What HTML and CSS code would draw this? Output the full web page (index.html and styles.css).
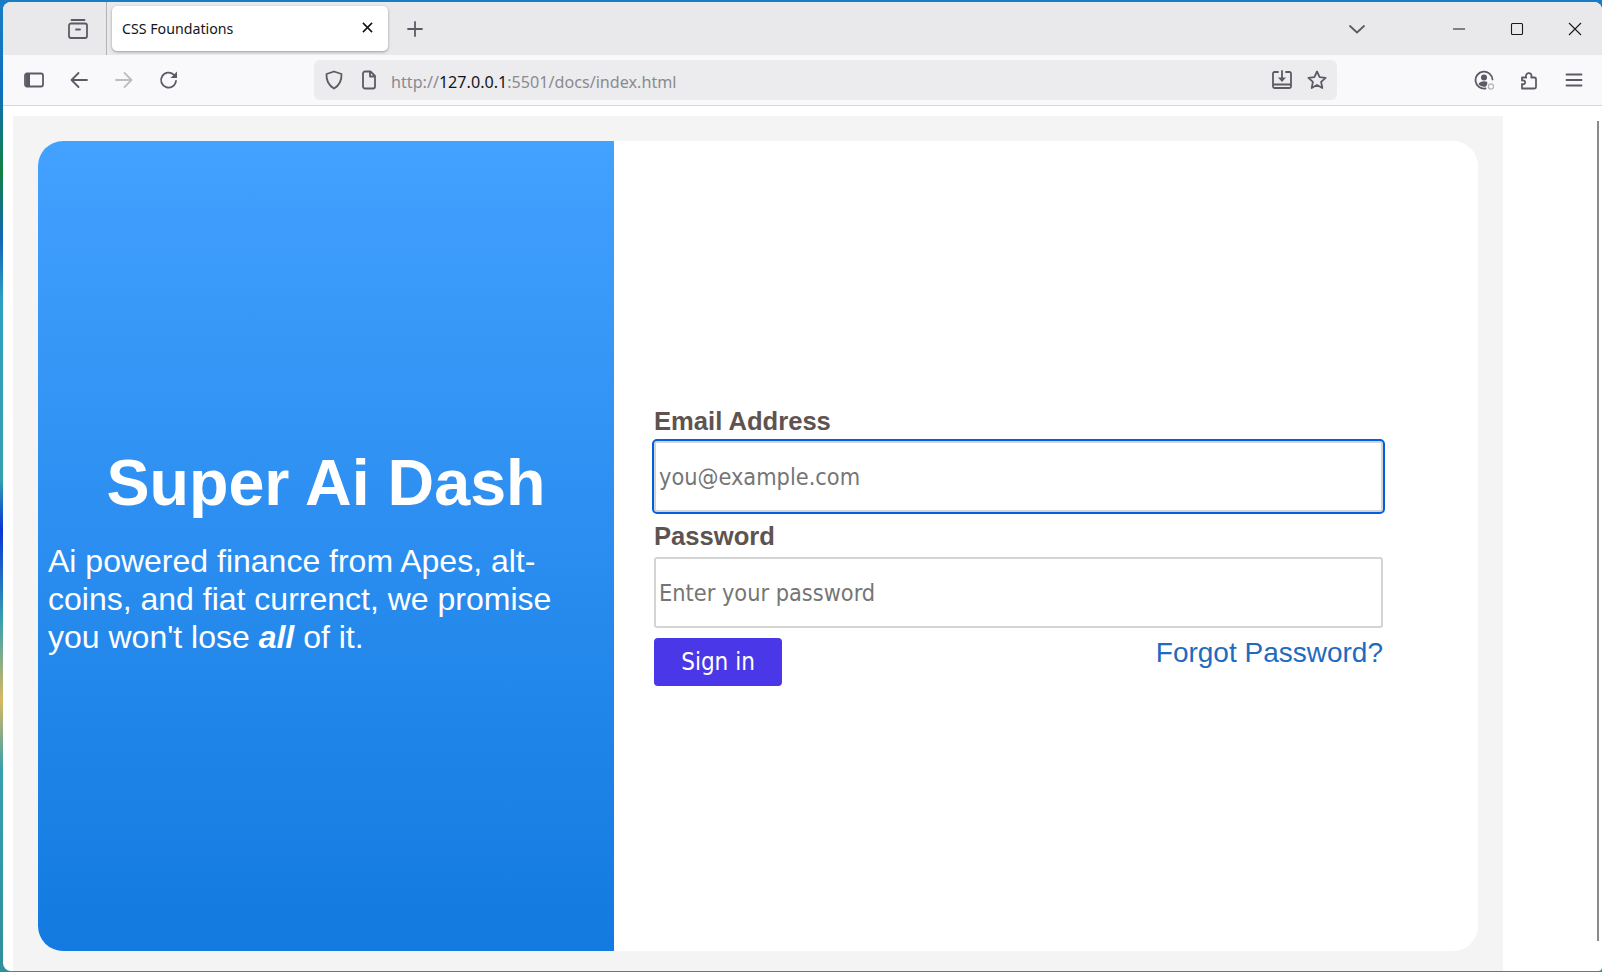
FILE: index.html
```html
<!DOCTYPE html>
<html lang="en">
<head>
  <meta charset="UTF-8">
  <title>CSS Foundations</title>
  <link rel="stylesheet" href="styles.css">
</head>
<body>
  <div class="window">
    <div class="tabbar">
      <div class="tab-manager">
        <svg class="icon" viewBox="0 0 20 20"><path d="M3.500 1h13M1 6.500C1 5.400 1.900 4.500 3 4.500h14c1.100 0 2 .9 2 2V17c0 1.100-.9 2-2 2H3c-1.100 0-2-.9-2-2zM8 10.500h4"/></svg>
      </div>
      <div class="tab">
        <span class="tab-title">CSS Foundations</span>
        <svg class="tab-close" viewBox="0 0 12 12"><path d="M1 1l10 10M11 1L1 11"/></svg>
      </div>
      <svg class="icon new-tab" viewBox="0 0 16 16"><path d="M8 1v14M1 8h14"/></svg>
      <div class="tabbar-fill"></div>
      <svg class="icon tab-list" viewBox="0 0 16 16"><path d="M1 5l7 6.500L15 5"/></svg>
      <div class="win-buttons">
        <svg class="win-btn" viewBox="0 0 14 14"><path d="M1 7h12"/></svg>
        <svg class="win-btn" viewBox="0 0 14 14"><rect x="1.500" y="1.500" width="11" height="11" rx="1"/></svg>
        <svg class="win-btn" viewBox="0 0 14 14"><path d="M1 1l12 12M13 1L1 13"/></svg>
      </div>
    </div>

    <div class="toolbar">
      <div class="nav-btn">
        <svg class="icon" viewBox="0 0 20 20"><rect x="1" y="3.500" width="18" height="13" rx="2"/><path class="solid" d="M2 4h4v12H2z"/></svg>
      </div>
      <div class="nav-btn">
        <svg class="icon" viewBox="0 0 20 20"><path d="M18 10H2.500M9.500 3L2.500 10l7 7"/></svg>
      </div>
      <div class="nav-btn disabled">
        <svg class="icon" viewBox="0 0 20 20"><path d="M2 10h15.500M10.500 3l7 7-7 7"/></svg>
      </div>
      <div class="nav-btn">
        <svg class="icon" viewBox="0 0 20 20"><path d="M17 11a7.500 7.500 0 1 1-2.300-6.400L17 7"/><path class="solid" d="M18 1.500V8h-6.500z"/></svg>
      </div>

      <div class="urlbar">
        <svg class="icon" viewBox="0 0 20 20"><path d="M10 1.500l7.500 2.500c.3 6.500-1.500 11-7.500 14.500C4 15 2.200 10.500 2.500 4z"/></svg>
        <svg class="icon page-icon" viewBox="0 0 20 20"><path d="M4 3.500C4 2.400 4.900 1.500 6 1.500h5.500L16 6v10.500c0 1.100-.9 2-2 2H6c-1.100 0-2-.9-2-2zM11 2v4.500h5"/></svg>
        <span class="url"><span class="url-dim">http://</span>127.0.0.1<span class="url-dim">:5501/docs/index.html</span></span>
        <svg class="icon" viewBox="0 0 20 20"><path d="M6 2H2.500C1.700 2 1 2.700 1 3.500v13c0 .8.700 1.500 1.500 1.500h15c.8 0 1.500-.7 1.500-1.500v-13c0-.8-.7-1.500-1.500-1.500H14M1 14.500h18M10 1v8"/><path class="solid" d="M6 7.500h8L10 12z"/></svg>
        <svg class="icon star" viewBox="0 0 20 20"><path d="M10 1.500l2.600 5.600 6 .7-4.500 4.100 1.200 6.100L10 15l-5.300 3 1.200-6.100L1.400 7.800l6-.7z"/></svg>
      </div>

      <div class="nav-btn">
        <svg class="icon" viewBox="0 0 20 20"><path d="M18.500 9.500a8.500 8.500 0 1 0-7 9"/><circle class="solid" cx="10" cy="7.500" r="3"/><path class="solid" d="M4.500 14c1-2 3-2.800 5.500-2.800 1.200 0 2.300.2 3.200.6v2.700c-.6.600-1 1.300-1.200 2-2.900.7-5.800-.2-7.500-2.500z"/><circle class="badge" cx="17" cy="16.500" r="2.600"/></svg>
      </div>
      <div class="nav-btn">
        <svg class="icon" viewBox="0 0 20 20"><path d="M3 7.500h4.200c-1.700-4.500 5.300-6.500 5.300-1.500 0 .5-.1 1-.3 1.500h3.300c.8 0 1.500.7 1.500 1.500v8c0 .8-.7 1.500-1.500 1.500H3v-4.500c4 1.500 4.300-4.500 0-3.500z"/></svg>
      </div>
      <div class="nav-btn">
        <svg class="icon" viewBox="0 0 20 20"><path d="M2.500 4.500h15M2.500 10h15M2.500 15.500h15"/></svg>
      </div>
    </div>

    <div class="page">
      <div class="page-body">
        <div class="card">
          <section class="hero">
            <h1>Super Ai Dash</h1>
            <p>Ai powered finance from Apes, alt-coins, and fiat currenct, we promise you won't lose <em>all</em> of it.</p>
          </section>
          <section class="login">
            <form class="login-form">
              <label for="email">Email Address</label>
              <input class="focused" type="email" id="email" placeholder="you@example.com">
              <label for="password">Password</label>
              <input type="password" id="password" placeholder="Enter your password">
              <div class="form-actions">
                <button type="button">Sign in</button>
                <a href="#">Forgot Password?</a>
              </div>
            </form>
          </section>
        </div>
      </div>
      <div class="scrollbar"></div>
    </div>
  </div>
</body>
</html>
```

FILE: styles.css
```css
* {
  box-sizing: border-box;
}
html, body {
  margin: 0;
  height: 972px;
  overflow: hidden;
}
body {
  padding: 2px 0 1px 3px;
  background: linear-gradient(180deg, #1a7cc4 0, #0f6fc0 90px, #12803f 170px, #1265b8 240px, #2f9fc0 300px, #35a0ae 480px, #0a34d8 530px, #35a0ae 620px, #d8b860 700px, #35a0ae 770px, #2f8f9a 972px);
  font-family: "Liberation Sans", Arial, sans-serif;
}
.window {
  width: 1599px;
  height: 969px;
  display: flex;
  flex-direction: column;
  background: #fff;
  border-radius: 8px 8px 4px 8px;
  overflow: hidden;
}

/* browser chrome */
.icon {
  width: 20px;
  height: 20px;
  flex: none;
  fill: none;
  stroke: #5b5b66;
  stroke-width: 1.800;
  stroke-linecap: round;
  stroke-linejoin: round;
}
.icon .solid {
  fill: #5b5b66;
  stroke: none;
}
.icon .badge {
  fill: #f9f9fb;
  stroke: #b4b4b8;
  stroke-width: 1.300;
}
.tabbar {
  height: 53px;
  flex: none;
  display: flex;
  align-items: center;
  background: #e9e9ec;
}
.tab-manager {
  width: 104px;
  height: 100%;
  flex: none;
  display: flex;
  align-items: center;
  justify-content: flex-end;
  padding-right: 18px;
  border-right: 1px solid #b3b3b6;
}
.tab {
  width: 276px;
  height: 45px;
  margin: 0 0 0 5px;
  flex: none;
  display: flex;
  align-items: center;
  justify-content: space-between;
  padding: 0 15px 2px 10px;
  background: #fff;
  border-radius: 5px;
  box-shadow: 0 1px 3px rgba(0, 0, 0, 0.35);
}
.tab-title {
  margin-top: 2px;
  font-family: "Noto Sans", sans-serif;
  font-size: 14.200px;
  color: #15141a;
}
.tab-close {
  width: 11px;
  height: 11px;
  fill: none;
  stroke: #15141a;
  stroke-width: 1.700;
}
.new-tab {
  width: 16px;
  height: 16px;
  margin-left: 19px;
}
.tabbar-fill {
  flex: 1;
}
.tab-list {
  width: 16px;
  height: 16px;
  margin-right: 87px;
}
.win-buttons {
  display: flex;
  gap: 44px;
  margin-right: 20px;
}
.win-btn {
  width: 14px;
  height: 14px;
  fill: none;
  stroke: #1a1a1a;
  stroke-width: 1.100;
}
.toolbar {
  height: 51px;
  flex: none;
  display: flex;
  align-items: center;
  padding-left: 8px;
  background: #f9f9fb;
  border-bottom: 1px solid #d7d7db;
}
.nav-btn {
  width: 45px;
  flex: none;
  display: flex;
  justify-content: center;
}
.nav-btn.disabled .icon {
  stroke: #bdbdc2;
}
.urlbar {
  width: 1023px;
  height: 40px;
  margin: 0 124px 0 123px;
  flex: none;
  display: flex;
  align-items: center;
  padding: 0 10px;
  background: #ececee;
  border-radius: 6px;
}
.page-icon {
  margin-left: 15px;
}
.url {
  flex: 1;
  margin-left: 12px;
  padding-top: 3px;
  font-family: "Noto Sans", sans-serif;
  font-size: 16.150px;
  color: #15141a;
}
.url-dim {
  color: #8a8a90;
}
.star {
  margin-left: 15px;
}

/* page */
.page {
  flex: 1;
  position: relative;
  padding: 10px 99px 0 10px;
  min-height: 0;
}
.page-body {
  height: 100%;
  padding: 25px 25px 20px;
  background: #f4f4f4;
}
.scrollbar {
  position: absolute;
  right: 3px;
  top: 15px;
  width: 2px;
  height: 820px;
  background: #8a8a8a;
}
.card {
  height: 810px;
  display: flex;
  background: #fff;
  border-radius: 25px;
  overflow: hidden;
}
.hero {
  width: 576px;
  flex: none;
  display: flex;
  flex-direction: column;
  justify-content: center;
  padding: 9px 10px 0;
  color: #fff;
  background: linear-gradient(180deg, #43a1ff, #127ae0);
}
.hero h1 {
  margin: 0 0 22px;
  font-size: 64.600px;
  line-height: 74px;
  text-align: center;
}
.hero p {
  margin: 0;
  max-width: 520px;
  font-size: 32px;
  line-height: 38px;
}
.hero em {
  font-weight: bold;
}
.login {
  flex: 1;
  display: flex;
  align-items: center;
  padding: 1px 95px 0 40px;
}
.login-form {
  width: 100%;
  display: flex;
  flex-direction: column;
}
.login-form label {
  margin-bottom: 6px;
  font-size: 25.600px;
  font-weight: bold;
  line-height: 28px;
  color: #5f5350;
}
.login-form input {
  height: 71px;
  margin-bottom: 10px;
  padding: 0 3px;
  font-family: "DejaVu Sans", sans-serif;
  font-stretch: condensed;
  font-size: 23.300px;
  background: #fff;
  border: 2px solid #d4d4d4;
  border-radius: 3px;
  outline: none;
}
.login-form input::placeholder {
  color: #757575;
  opacity: 1;
}
.login-form input.focused {
  outline: 2px solid #0060df;
}
#password {
  margin-top: 1px;
}
.form-actions {
  display: flex;
  justify-content: space-between;
  align-items: flex-start;
}
.form-actions button {
  width: 128px;
  height: 48px;
  font-family: "DejaVu Sans", sans-serif;
  font-stretch: condensed;
  font-size: 24px;
  color: #fff;
  background: #4a38e8;
  border: none;
  border-radius: 4px;
}
.form-actions a {
  font-size: 28px;
  line-height: 30px;
  color: #1f6bc0;
  text-decoration: none;
}
```
